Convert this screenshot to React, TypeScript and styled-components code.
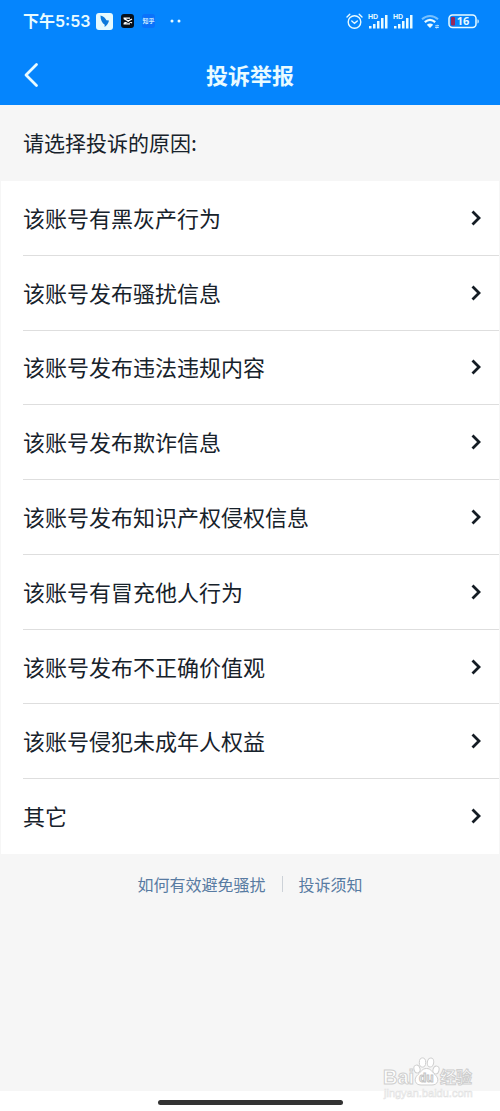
import React from "react";
import styled, { createGlobalStyle } from "styled-components";

const GlobalStyle = createGlobalStyle`
  * { box-sizing: border-box; }
  body {
    margin: 0;
    background: #f6f6f6;
    color: #17222b;
    font-family: "Noto Sans CJK SC", "Noto Sans", sans-serif;
  }
`;

const Page = styled.div`
  position: relative;
  display: flex;
  flex-direction: column;
  min-height: 100vh;
`;

const TopArea = styled.div`
  background: #0585fd;
  color: #e9fbff;
`;

const StatusBar = styled.div`
  display: flex;
  align-items: center;
  justify-content: space-between;
  height: 42px;
  padding: 0 20px 0 23px;
`;

const StatusGroup = styled.div<{ $gap: number }>`
  display: flex;
  align-items: center;
  gap: ${(p) => p.$gap}px;
`;

const Clock = styled.span`
  font-family: Inter, "Noto Sans CJK SC", sans-serif;
  font-size: 16px;
  font-weight: 600;
  line-height: 24px;
  white-space: nowrap;
`;

const TitleBar = styled.header`
  display: grid;
  grid-template-columns: 64px 1fr 64px;
  align-items: center;
  height: 63px;
  padding-top: 3px;
`;

const BackButton = styled.button`
  display: flex;
  align-items: center;
  height: 48px;
  padding: 0 0 0 23px;
  border: 0;
  background: none;
  color: inherit;
  cursor: pointer;
`;

const Title = styled.h1`
  margin: 0;
  padding-bottom: 2px;
  font-size: 22px;
  font-weight: 700;
  line-height: 32px;
  text-align: center;
`;

const Prompt = styled.h2`
  margin: 0;
  padding: 21px 23px 23px;
  font-size: 21px;
  font-weight: 400;
  line-height: 32px;
`;

const ReasonList = styled.ul`
  display: grid;
  grid-auto-rows: 1fr;
  min-height: 673px;
  margin: 0 1px;
  padding: 0 0 0 22px;
  list-style: none;
  background: #fff;
`;

const ReasonItem = styled.li`
  display: flex;
  border-bottom: 1px solid #dedede;
  &:last-child { border-bottom-color: transparent; }
`;

const ReasonButton = styled.button`
  display: flex;
  flex: 1;
  align-items: center;
  justify-content: space-between;
  padding: 0 18px 0 0;
  border: 0;
  background: none;
  color: inherit;
  font-family: inherit;
  font-size: 22px;
  line-height: 32px;
  text-align: left;
  cursor: pointer;
`;

const ReasonText = styled.span`
  padding-bottom: 2px;
`;

const FooterLinks = styled.footer`
  display: flex;
  align-items: center;
  justify-content: center;
  padding: 18px 0;
`;

const FooterLink = styled.a`
  padding: 0 16px;
  color: #587ba2;
  font-size: 16px;
  line-height: 24px;
  text-decoration: none;
`;

const Separator = styled.span`
  width: 1px;
  height: 16px;
  background: #cdd2d8;
`;

const GestureBar = styled.div`
  display: flex;
  justify-content: center;
  margin-top: auto;
  height: 20px;
  padding-top: 9px;
  background: #fff;
`;

const GesturePill = styled.div`
  width: 37%;
  height: 5px;
  border-radius: 3px;
  background: #333;
`;

const Watermark = styled.svg`
  position: absolute;
  right: 24px;
  bottom: 6px;
  pointer-events: none;
`;

const reasons = [
  "该账号有黑灰产行为",
  "该账号发布骚扰信息",
  "该账号发布违法违规内容",
  "该账号发布欺诈信息",
  "该账号发布知识产权侵权信息",
  "该账号有冒充他人行为",
  "该账号发布不正确价值观",
  "该账号侵犯未成年人权益",
  "其它",
];

const BirdAppIcon = () => (
  <svg width="17" height="17" viewBox="0 0 17 17" aria-hidden="true">
    <rect width="17" height="17" rx="3" fill="#e6faff" />
    <path d="M4.5 2.5C7.5 3.2 9.4 5 10.4 7.2L13 7.6C12.4 10.6 10.9 12.7 8.6 14L8.7 11.8C6 10 4.4 6.6 4.5 2.5Z" fill="#0c79dc" />
  </svg>
);

const ScissorAppIcon = () => (
  <svg width="13" height="14" viewBox="0 0 13 14" aria-hidden="true">
    <rect width="13" height="14" rx="3" fill="#07101c" />
    <path d="M2.5 4.2H9M2.5 9.8H9M3 4.6 11 9M3 9.4 11 5" fill="none" stroke="#fff" strokeWidth="1.3" />
  </svg>
);

const ZhihuAppIcon = () => (
  <svg width="13" height="14" viewBox="0 0 13 14" aria-hidden="true">
    <rect width="13" height="14" rx="3" fill="#0a72fa" />
    <text x="6.5" y="9" fontSize="6" fontWeight="700" textAnchor="middle" fill="#c9eaff">知乎</text>
  </svg>
);

const MoreDots = () => (
  <svg width="12" height="4" viewBox="0 0 12 4" aria-hidden="true">
    <circle cx="2" cy="2" r="1.5" fill="currentColor" />
    <circle cx="9" cy="2" r="1.5" fill="currentColor" />
  </svg>
);

const AlarmIcon = () => (
  <svg width="17" height="17" viewBox="0 0 17 17" fill="none" stroke="currentColor" strokeWidth="1.4" strokeLinecap="round" aria-hidden="true">
    <circle cx="8.5" cy="9" r="6.3" />
    <path d="M1 4 3.8 1.3M16 4 13.2 1.3M5.8 8 8.5 10.4 11.3 8" />
  </svg>
);

const SignalIcon = () => (
  <svg width="20" height="17" viewBox="0 0 20 17" fill="currentColor" aria-hidden="true">
    <text x="0" y="6" fontSize="7" fontWeight="700" fontFamily="Liberation Sans, sans-serif">HD</text>
    <rect x="1" y="13" width="2.5" height="2.5" />
    <rect x="5" y="11" width="2.5" height="4.5" />
    <rect x="9" y="8" width="2.5" height="7.5" />
    <rect x="13" y="5" width="2.5" height="10.5" />
    <rect x="17" y="2" width="2.5" height="13.5" />
  </svg>
);

const WifiIcon = () => (
  <svg width="19" height="15" viewBox="0 0 19 15" fill="none" stroke="currentColor" aria-hidden="true">
    <path d="M1 5.3C5.8.8 12.2.8 17 5.3" strokeWidth="2" opacity=".5" />
    <path d="M3.8 8.2C7.1 5.3 10.9 5.3 14.2 8.2" strokeWidth="2.2" />
    <path d="M5.8 10.8C8 9 10 9 12.2 10.8L9 14Z" fill="currentColor" stroke="none" />
    <path d="M14.3 11.8H17.5L16.5 10.8M17.8 13.4H14.5L15.5 14.4" strokeWidth=".9" />
  </svg>
);

const BatteryIcon = () => (
  <svg width="32" height="15" viewBox="0 0 32 15" aria-hidden="true">
    <rect x="1" y="1" width="27" height="12.5" rx="3.5" fill="none" stroke="currentColor" strokeWidth="1.5" />
    <rect x="3" y="3" width="4" height="8.5" rx="1" fill="#97295a" />
    <path d="M29.5 5.2C31.2 5.6 31.2 9 29.5 9.4Z" fill="currentColor" />
    <text x="15" y="11.3" fontSize="11" fontWeight="700" textAnchor="middle" fill="currentColor" fontFamily="Noto Sans, sans-serif">16</text>
  </svg>
);

const BackIcon = () => (
  <svg width="16" height="26" viewBox="0 0 16 26" aria-hidden="true">
    <path d="M13.5 2.5 3 13 13.5 23.5" fill="none" stroke="currentColor" strokeWidth="2.8" strokeLinecap="round" strokeLinejoin="round" />
  </svg>
);

const ChevronIcon = () => (
  <svg width="10" height="16" viewBox="0 0 10 16" aria-hidden="true">
    <path d="M1.5 1.5 8 8 1.5 14.5" fill="none" stroke="#141c24" strokeWidth="2.8" strokeLinejoin="miter" />
  </svg>
);

const BaiduWatermark = () => (
  <Watermark width="96" height="50" viewBox="0 0 96 50" role="img" aria-label="Baidu 经验">
    <g fill="#fff" stroke="#cfcfcf" strokeWidth="1">
      <text x="3" y="29" fontSize="20" fontWeight="700" fontFamily="Liberation Sans, sans-serif">Bai</text>
      <ellipse cx="37" cy="14" rx="3" ry="4" transform="rotate(-15 37 14)" />
      <ellipse cx="42.5" cy="7.5" rx="3.2" ry="4.6" />
      <ellipse cx="50.5" cy="7.5" rx="3.2" ry="4.6" transform="rotate(10 50.5 7.5)" />
      <ellipse cx="56" cy="15" rx="3" ry="4" transform="rotate(15 56 15)" />
      <path d="M46.5 13.5C51 13.5 52 17 55 19.5C60 24 58 30 52 30H41C35 30 33 24 38 19.5C41 17 42 13.5 46.5 13.5Z" />
      <text x="39" y="27" fontSize="12" fontWeight="700" stroke="#c4c4c4" fontFamily="Liberation Sans, sans-serif">du</text>
      <text x="60" y="28" fontSize="16" fontWeight="700">经验</text>
    </g>
    <text x="4" y="42" fontSize="11" fill="#fff" stroke="#e2e2e2" strokeWidth=".6" fontFamily="Liberation Sans, sans-serif">jingyan.baidu.com</text>
  </Watermark>
);

export default function App() {
  return (
    <>
      <GlobalStyle />
      <Page>
        <TopArea>
          <StatusBar>
            <StatusGroup $gap={15}>
              <StatusGroup $gap={8}>
                <StatusGroup $gap={6}>
                  <Clock>下午5:53</Clock>
                  <BirdAppIcon />
                </StatusGroup>
                <ScissorAppIcon />
                <ZhihuAppIcon />
              </StatusGroup>
              <MoreDots />
            </StatusGroup>
            <StatusGroup $gap={8}>
              <StatusGroup $gap={5}>
                <AlarmIcon />
                <SignalIcon />
                <SignalIcon />
              </StatusGroup>
              <WifiIcon />
              <BatteryIcon />
            </StatusGroup>
          </StatusBar>
          <TitleBar>
            <BackButton type="button" aria-label="返回">
              <BackIcon />
            </BackButton>
            <Title>投诉举报</Title>
          </TitleBar>
        </TopArea>
        <main>
          <Prompt>请选择投诉的原因:</Prompt>
          <ReasonList>
            {reasons.map((reason) => (
              <ReasonItem key={reason}>
                <ReasonButton type="button">
                  <ReasonText>{reason}</ReasonText>
                  <ChevronIcon />
                </ReasonButton>
              </ReasonItem>
            ))}
          </ReasonList>
        </main>
        <FooterLinks>
          <FooterLink href="#avoid">如何有效避免骚扰</FooterLink>
          <Separator />
          <FooterLink href="#notice">投诉须知</FooterLink>
        </FooterLinks>
        <GestureBar>
          <GesturePill />
        </GestureBar>
        <BaiduWatermark />
      </Page>
    </>
  );
}
